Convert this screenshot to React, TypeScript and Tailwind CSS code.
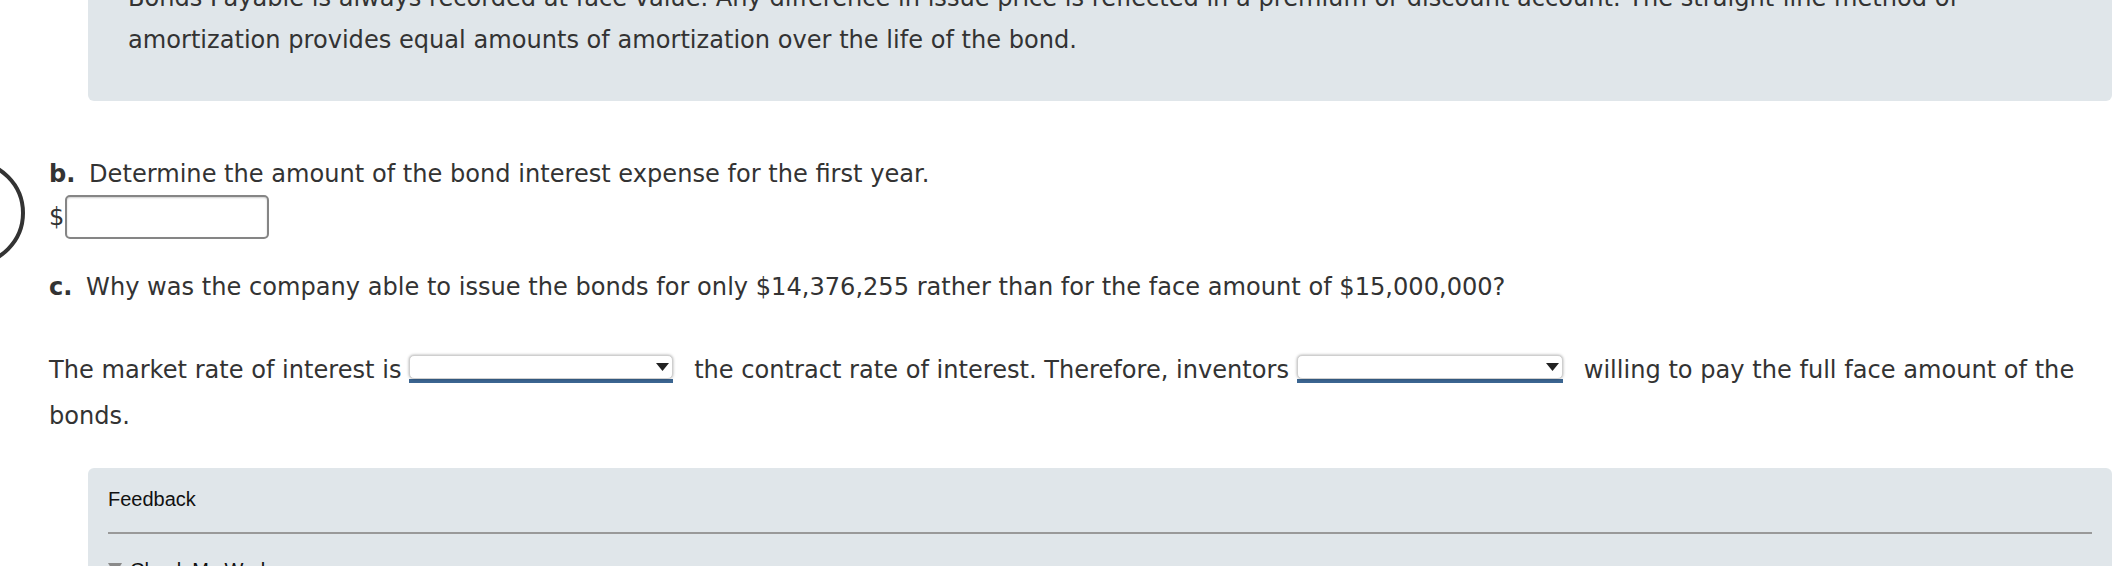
import React from "react";

function SelectBox({ width }: { width: string }) {
  return (
    <span className={`inline-block align-[-5px] ${width}`}>
      <span className="relative block h-[24px] rounded-[5px] border border-[#cfcfcf] bg-white shadow-[0_0_3px_rgba(0,0,0,0.35)]">
        <svg width="13" height="8" viewBox="0 0 13 8" className="absolute right-[3px] top-[7px]">
          <path d="M0 0 H13 L6.5 8 Z" fill="#222" />
        </svg>
      </span>
      <span className="block h-[4px] bg-[#3b6591]" />
    </span>
  );
}

export default function App() {
  const body = "font-['DejaVu_Sans',Verdana,sans-serif] text-[24.1px] text-[#333]";

  return (
    <div className="relative h-[566px] w-full overflow-hidden bg-white">
      {/* progress ring at the left edge */}
      <div className="absolute left-[-81px] top-[160px] h-[106px] w-[106px] rounded-full border-4 border-[#333]" />

      <div className={`pl-[49px] pr-[10px] ${body}`}>
        <div className="ml-[39px] mt-[-63px] rounded-[6px] bg-[#e0e6ea] px-[40px] py-[40px] leading-[42px]">
          Bonds Payable is always recorded at face value. Any difference in issue price is reflected in a premium or
          discount account. The straight-line method of amortization provides equal amounts of amortization over the
          life of the bond.
        </div>

        <p className="mt-[52px] leading-[42px]">
          <span className="mr-[6px] font-bold">b.</span> Determine the amount of the bond interest expense for the first
          year.
        </p>
        <div className="flex h-[44px] items-center">
          <span className="mr-[1px] leading-none">$</span>
          <span className="h-[44px] w-[204px] rounded-[5px] border-2 border-[#858585] bg-white shadow-[inset_0_1px_2px_rgba(0,0,0,0.2)]" />
        </div>

        <p className="mt-[27px] leading-[42px]">
          <span className="mr-[6px] font-bold">c.</span> Why was the company able to issue the bonds for only
          $14,376,255 rather than for the face amount of $15,000,000?
        </p>

        <p className="mt-[39px] leading-[46px]">
          The market rate of interest is <SelectBox width="w-[264px]" />
          <span className="ml-[21px]">the contract rate of interest. Therefore, inventors</span>{" "}
          <SelectBox width="w-[266px]" />
          <span className="ml-[21px]">willing to pay the full face amount of the bonds.</span>
        </p>

        <div className="ml-[39px] mt-[29px] rounded-[6px] bg-[#e0e6ea] px-[20px] pb-[20px] pt-[19px] font-['Liberation_Sans',Arial,sans-serif] text-[20px] leading-[24px] text-[#111]">
          <div>Feedback</div>
          <div className="mt-[21px] h-[2px] bg-[#999]" />
          <div className="mt-[24px] flex items-start gap-[8px]">
            <svg width="14" height="12" viewBox="0 0 14 12" className="mt-[5px]">
              <path d="M0 0 H14 L7 12 Z" fill="#8a8a8a" />
            </svg>
            <span>Check My Work</span>
          </div>
        </div>
      </div>
    </div>
  );
}
